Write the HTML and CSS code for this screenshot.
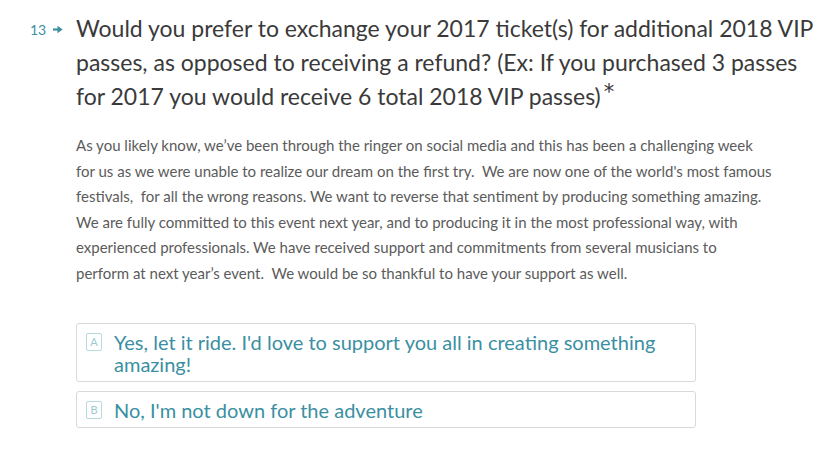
FILE: index.html
```html
<!DOCTYPE html>
<html>
<head>
<meta charset="utf-8">
<link rel="stylesheet" href="styles.css">
</head>
<body>
<div class="question">
  <div class="qnum"><span class="num">13</span><svg class="arrow" width="10" height="9" viewBox="0 0 10 9"><path d="M0 4.5H6.5" stroke="#3d8ea0" stroke-width="2.2"/><path d="M4.5 0.8L9.6 4.5L4.5 8.2Z" fill="#3d8ea0"/></svg></div>
  <div class="qbody">
    <h1 class="title">Would you prefer to exchange your 2017 ticket(s) for additional 2018 VIP<br>passes, as opposed to receiving a refund? (Ex: If you purchased 3 passes<br>for 2017 you would receive 6 total 2018 VIP passes)<span class="star">*</span></h1>
    <p class="desc">As you likely know, we’ve been through the ringer on social media and this has been a challenging week<br>for us as we were unable to realize our dream on the first try.&nbsp; We are now one of the world's most famous<br>festivals,&nbsp; for all the wrong reasons. We want to reverse that sentiment by producing something amazing.<br>We are fully committed to this event next year, and to producing it in the most professional way, with<br>experienced professionals. We have received support and commitments from several musicians to<br>perform at next year’s event.&nbsp; We would be so thankful to have your support as well.</p>
    <div class="choices">
      <div class="choice"><span class="key">A</span><span class="label">Yes, let it ride. I'd love to support you all in creating something<br>amazing!</span></div>
      <div class="choice"><span class="key">B</span><span class="label">No, I'm not down for the adventure</span></div>
    </div>
  </div>
</div>
</body>
</html>
```
FILE: styles.css
```css
html, body { margin: 0; padding: 0; background: #fff; }
body { font-family: Lato, "Open Sans", sans-serif; }
.question { display: flex; padding: 11px 0 0 30px; }
.qnum { width: 46px; display: flex; align-items: center; height: 36px; gap: 7px; color: #3d8ea0; font-size: 14px; }
.arrow { display: block; }
.qbody { width: 760px; }
.title { margin: 0; font-weight: 400; font-size: 23px; line-height: 34px; color: #3a3a3a; white-space: nowrap; }
.star { display: inline-block; font-family: "DejaVu Sans", sans-serif; font-size: 21px; line-height: 0; position: relative; top: -6px; margin-left: 3px; color: #333; }
.desc { margin: 20px 0 0 0; font-size: 15px; line-height: 25.6px; color: #5b5b5b; white-space: nowrap; }
.choices { margin-top: 36px; width: 620px; display: flex; flex-direction: column; gap: 9px; }
.choice { border: 1px solid #d9d9d9; border-radius: 3px; display: flex; align-items: flex-start; padding: 7px 10px 6px 9px; }
.key { width: 14px; height: 16px; border: 1px solid #b9d9df; border-radius: 2px; color: #9cc9d2; font-size: 11px; line-height: 16px; text-align: center; margin-top: 2px; margin-right: 12px; flex: none; }
.label { font-size: 20px; line-height: 22px; color: #3b8fa2; }
```
